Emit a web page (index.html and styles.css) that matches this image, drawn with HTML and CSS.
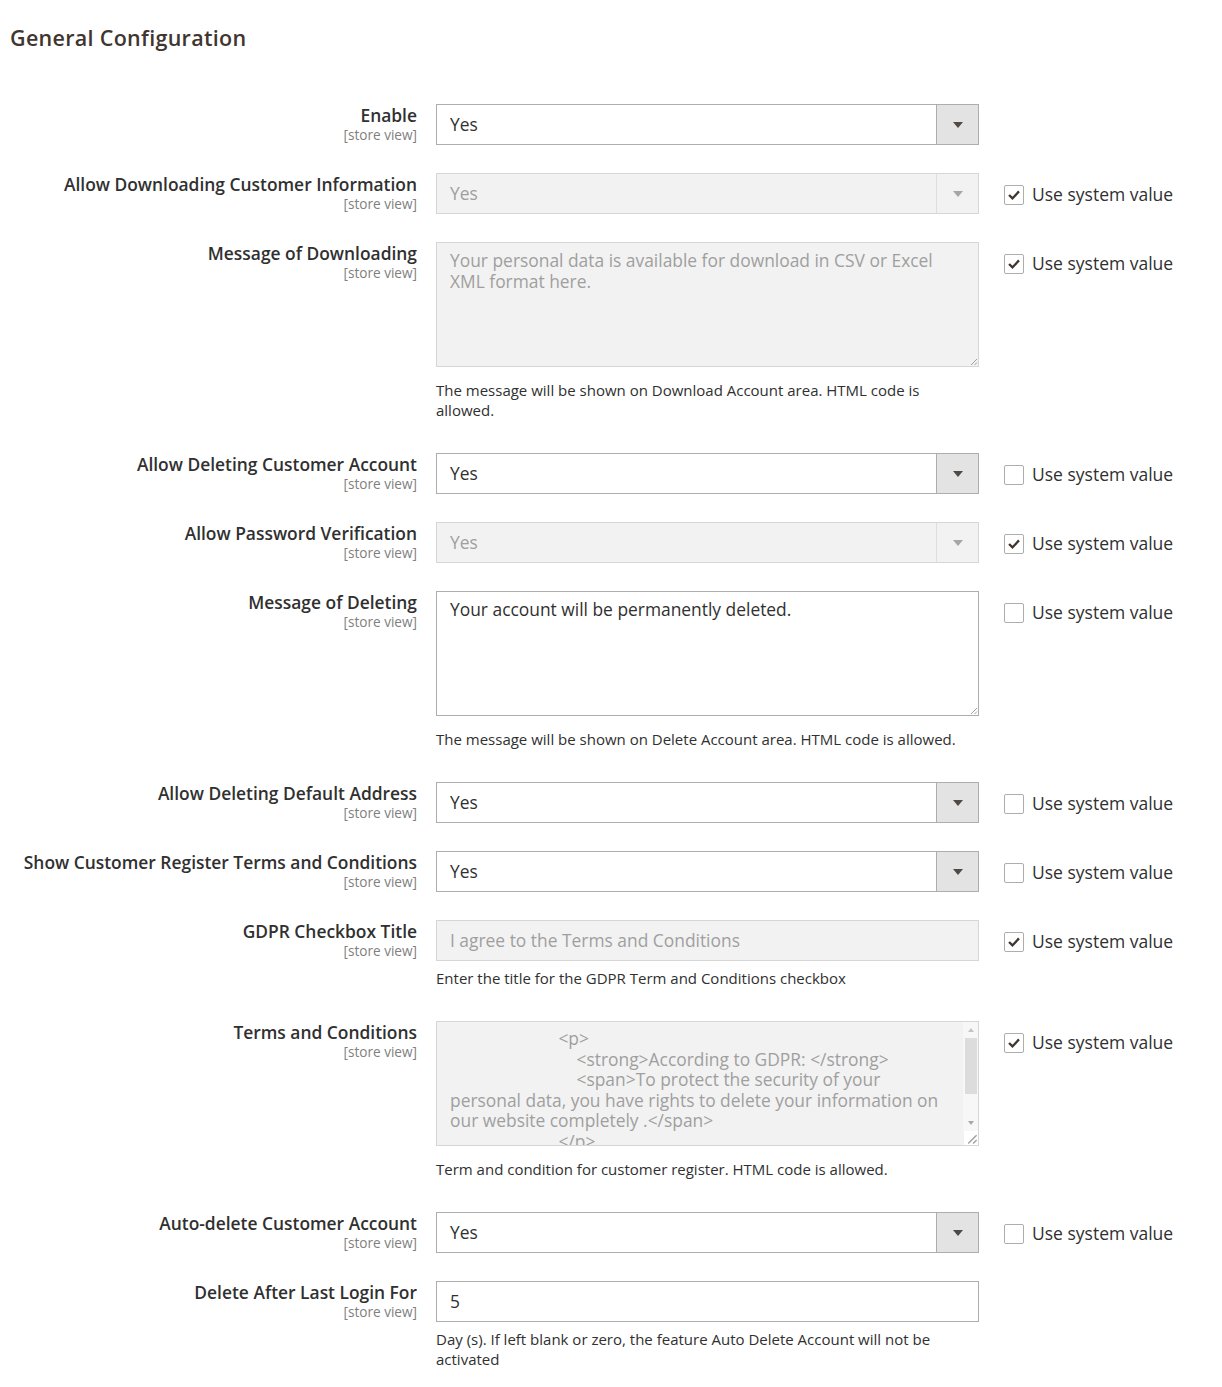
FILE: index.html
```html
<!DOCTYPE html>
<html>
<head>
    <title>General Configuration</title>
    <link rel="stylesheet" href="styles.css">
</head>

<body>

    <section class="config-section">
        <h2 class="section-title">General Configuration</h2>

        <div class="config-rows">

            <!-- Enable -->
            <div class="config-row">
                <div class="field-label">
                    <span class="label-text">Enable</span>
                    <span class="scope">[store view]</span>
                </div>
                <div class="field-control">
                    <div class="select">
                        <span class="select-value">Yes</span>
                        <span class="select-arrow"><i class="triangle"></i></span>
                    </div>
                </div>
                <div class="field-system"></div>
            </div>

            <!-- Allow Downloading Customer Information -->
            <div class="config-row">
                <div class="field-label">
                    <span class="label-text">Allow Downloading Customer Information</span>
                    <span class="scope">[store view]</span>
                </div>
                <div class="field-control">
                    <div class="select disabled">
                        <span class="select-value">Yes</span>
                        <span class="select-arrow"><i class="triangle"></i></span>
                    </div>
                </div>
                <div class="field-system">
                    <label class="system-check"><span class="checkbox checked"><svg viewBox="0 0 20 20"><polyline points="4.5,10 8.3,13.8 15.5,6"/></svg></span>Use system value</label>
                </div>
            </div>

            <!-- Message of Downloading -->
            <div class="config-row">
                <div class="field-label">
                    <span class="label-text">Message of Downloading</span>
                    <span class="scope">[store view]</span>
                </div>
                <div class="field-control">
                    <div class="textarea disabled">Your personal data is available for download in CSV or Excel XML format here.<span class="grip"><svg viewBox="0 0 10 10"><line x1="9" y1="3" x2="3" y2="9"/><line x1="9" y1="6.5" x2="6.5" y2="9"/></svg></span></div>
                    <p class="note">The message will be shown on Download Account area. HTML code is allowed.</p>
                </div>
                <div class="field-system">
                    <label class="system-check"><span class="checkbox checked"><svg viewBox="0 0 20 20"><polyline points="4.5,10 8.3,13.8 15.5,6"/></svg></span>Use system value</label>
                </div>
            </div>

            <!-- Allow Deleting Customer Account -->
            <div class="config-row">
                <div class="field-label">
                    <span class="label-text">Allow Deleting Customer Account</span>
                    <span class="scope">[store view]</span>
                </div>
                <div class="field-control">
                    <div class="select">
                        <span class="select-value">Yes</span>
                        <span class="select-arrow"><i class="triangle"></i></span>
                    </div>
                </div>
                <div class="field-system">
                    <label class="system-check"><span class="checkbox"></span>Use system value</label>
                </div>
            </div>

            <!-- Allow Password Verification -->
            <div class="config-row">
                <div class="field-label">
                    <span class="label-text">Allow Password Verification</span>
                    <span class="scope">[store view]</span>
                </div>
                <div class="field-control">
                    <div class="select disabled">
                        <span class="select-value">Yes</span>
                        <span class="select-arrow"><i class="triangle"></i></span>
                    </div>
                </div>
                <div class="field-system">
                    <label class="system-check"><span class="checkbox checked"><svg viewBox="0 0 20 20"><polyline points="4.5,10 8.3,13.8 15.5,6"/></svg></span>Use system value</label>
                </div>
            </div>

            <!-- Message of Deleting -->
            <div class="config-row">
                <div class="field-label">
                    <span class="label-text">Message of Deleting</span>
                    <span class="scope">[store view]</span>
                </div>
                <div class="field-control">
                    <div class="textarea">Your account will be permanently deleted.<span class="grip"><svg viewBox="0 0 10 10"><line x1="9" y1="3" x2="3" y2="9"/><line x1="9" y1="6.5" x2="6.5" y2="9"/></svg></span></div>
                    <p class="note">The message will be shown on Delete Account area. HTML code is allowed.</p>
                </div>
                <div class="field-system">
                    <label class="system-check"><span class="checkbox"></span>Use system value</label>
                </div>
            </div>

            <!-- Allow Deleting Default Address -->
            <div class="config-row">
                <div class="field-label">
                    <span class="label-text">Allow Deleting Default Address</span>
                    <span class="scope">[store view]</span>
                </div>
                <div class="field-control">
                    <div class="select">
                        <span class="select-value">Yes</span>
                        <span class="select-arrow"><i class="triangle"></i></span>
                    </div>
                </div>
                <div class="field-system">
                    <label class="system-check"><span class="checkbox"></span>Use system value</label>
                </div>
            </div>

            <!-- Show Customer Register Terms and Conditions -->
            <div class="config-row">
                <div class="field-label">
                    <span class="label-text">Show Customer Register Terms and Conditions</span>
                    <span class="scope">[store view]</span>
                </div>
                <div class="field-control">
                    <div class="select">
                        <span class="select-value">Yes</span>
                        <span class="select-arrow"><i class="triangle"></i></span>
                    </div>
                </div>
                <div class="field-system">
                    <label class="system-check"><span class="checkbox"></span>Use system value</label>
                </div>
            </div>

            <!-- GDPR Checkbox Title -->
            <div class="config-row">
                <div class="field-label">
                    <span class="label-text">GDPR Checkbox Title</span>
                    <span class="scope">[store view]</span>
                </div>
                <div class="field-control">
                    <div class="input disabled">I agree to the Terms and Conditions</div>
                    <p class="note">Enter the title for the GDPR Term and Conditions checkbox</p>
                </div>
                <div class="field-system">
                    <label class="system-check"><span class="checkbox checked"><svg viewBox="0 0 20 20"><polyline points="4.5,10 8.3,13.8 15.5,6"/></svg></span>Use system value</label>
                </div>
            </div>

            <!-- Terms and Conditions -->
            <div class="config-row">
                <div class="field-label">
                    <span class="label-text">Terms and Conditions</span>
                    <span class="scope">[store view]</span>
                </div>
                <div class="field-control">
                    <div class="textarea disabled code-area"><div class="code-text">                        &lt;p&gt;
                            &lt;strong&gt;According to GDPR: &lt;/strong&gt;
                            &lt;span&gt;To protect the security of your personal data, you have rights to delete your information on our website completely .&lt;/span&gt;
                        &lt;/p&gt;</div><span class="scrollbar"><i class="sb-up"></i><i class="sb-thumb"></i><i class="sb-down"></i></span><span class="grip"><svg viewBox="0 0 10 10"><line x1="9" y1="3" x2="3" y2="9"/><line x1="9" y1="6.5" x2="6.5" y2="9"/></svg></span></div>
                    <p class="note">Term and condition for customer register. HTML code is allowed.</p>
                </div>
                <div class="field-system">
                    <label class="system-check"><span class="checkbox checked"><svg viewBox="0 0 20 20"><polyline points="4.5,10 8.3,13.8 15.5,6"/></svg></span>Use system value</label>
                </div>
            </div>

            <!-- Auto-delete Customer Account -->
            <div class="config-row">
                <div class="field-label">
                    <span class="label-text">Auto-delete Customer Account</span>
                    <span class="scope">[store view]</span>
                </div>
                <div class="field-control">
                    <div class="select">
                        <span class="select-value">Yes</span>
                        <span class="select-arrow"><i class="triangle"></i></span>
                    </div>
                </div>
                <div class="field-system">
                    <label class="system-check"><span class="checkbox"></span>Use system value</label>
                </div>
            </div>

            <!-- Delete After Last Login For -->
            <div class="config-row">
                <div class="field-label">
                    <span class="label-text">Delete After Last Login For</span>
                    <span class="scope">[store view]</span>
                </div>
                <div class="field-control">
                    <div class="input">5</div>
                    <p class="note">Day (s). If left blank or zero, the feature Auto Delete Account will not be activated</p>
                </div>
                <div class="field-system"></div>
            </div>

        </div>
    </section>

</body>
</html>
```

FILE: styles.css
```css
/* Base Styles */
body {
    font-family: 'Open Sans', 'Liberation Sans', Arial, sans-serif;
    margin: 0;
    padding: 0;
    background-color: #ffffff;
    color: #303030;
}

/* Section */
.config-section {
    padding: 0 0 20px 10px;
}

.section-title {
    margin: 0;
    padding-top: 24px;
    height: 104px;
    box-sizing: border-box;
    font-size: 21.5px;
    line-height: 28px;
    font-weight: 600;
    color: #41362f;
    letter-spacing: 0.3px;
}

/* Rows */
.config-row {
    display: grid;
    grid-template-columns: 407px 544px auto;
    column-gap: 19px;
    padding-bottom: 28px;
}

.field-label {
    display: flex;
    flex-direction: column;
    align-items: flex-end;
    text-align: right;
}

.label-text {
    font-size: 17.4px;
    line-height: 22px;
    font-weight: 600;
    color: #303030;
}

.scope {
    font-size: 13.6px;
    line-height: 18px;
    color: #808080;
}

/* Controls */
.select,
.input,
.textarea {
    box-sizing: border-box;
    width: 543px;
    border: 1px solid #adadad;
    background: #ffffff;
    font-size: 17.4px;
    color: #303030;
}

.select {
    height: 41px;
    display: flex;
    align-items: stretch;
}

.select-value {
    flex: 1;
    padding-left: 13px;
    line-height: 39px;
}

.select-arrow {
    width: 41px;
    background: #e3e3e3;
    border-left: 1px solid #adadad;
    display: flex;
    align-items: center;
    justify-content: center;
}

.triangle {
    width: 0;
    height: 0;
    border-left: 5px solid transparent;
    border-right: 5px solid transparent;
    border-top: 6px solid #514943;
}

.input {
    height: 41px;
    line-height: 39px;
    padding-left: 13px;
}

.textarea {
    position: relative;
    height: 125px;
    padding: 7px 13px;
    line-height: 21px;
    overflow: hidden;
}

/* Disabled state */
.disabled {
    background: #f2f2f2;
    border-color: #d6d6d6;
    color: #9f9f9f;
}

.select.disabled .select-arrow {
    background: #f2f2f2;
    border-left-color: #dedede;
}

.select.disabled .triangle {
    border-top-color: #a6a6a6;
}

/* Resize grip */
.grip {
    position: absolute;
    right: 0;
    bottom: 0;
    width: 10px;
    height: 10px;
    background: inherit;
}

.grip svg {
    display: block;
    width: 10px;
    height: 10px;
    stroke: #a0a0a0;
    stroke-width: 1;
}

/* Code textarea */
.code-area {
    padding: 6px 28px 0 13px;
    line-height: 20.6px;
}

.code-text {
    white-space: pre-wrap;
}

.scrollbar {
    position: absolute;
    top: 0;
    right: 0;
    width: 15px;
    bottom: 14px;
    background: #f7f7f7;
    display: flex;
    flex-direction: column;
    align-items: center;
}

.sb-up,
.sb-down {
    width: 0;
    height: 0;
    border-left: 3px solid transparent;
    border-right: 3px solid transparent;
    margin: 6px 0;
}

.sb-up {
    border-bottom: 4px solid #c4c4c4;
}

.sb-down {
    border-top: 4px solid #a8a8a8;
}

.sb-thumb {
    width: 12px;
    height: 56px;
    background: #dcdcdc;
    margin-bottom: auto;
}

.code-area .grip {
    background: #ffffff;
    width: 14px;
    height: 14px;
}

.code-area .grip svg {
    width: 14px;
    height: 14px;
}

/* Notes */
.note {
    margin: 7px 0 5px;
    width: 543px;
    font-size: 15px;
    line-height: 20px;
    color: #303030;
}

.textarea + .note {
    margin-top: 13px;
}

/* Use system value */
.field-system {
    padding-left: 5px;
}

.system-check {
    height: 41px;
    display: flex;
    align-items: center;
    font-size: 17.5px;
    color: #303030;
    white-space: nowrap;
}

.checkbox {
    box-sizing: border-box;
    width: 20px;
    height: 20px;
    margin-right: 8px;
    margin-top: 2px;
    border: 1px solid #adadad;
    border-radius: 2px;
    background: #ffffff;
}

.checkbox svg {
    display: block;
    width: 18px;
    height: 18px;
    fill: none;
    stroke: #41362f;
    stroke-width: 2.6;
}
```
